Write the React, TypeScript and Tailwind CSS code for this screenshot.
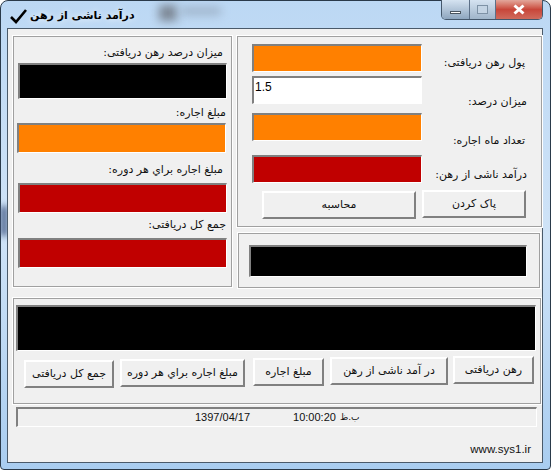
const FONT = "font-['DejaVu_Sans',sans-serif]";

function Sunken({ className, children }: { className: string; children?: React.ReactNode }) {
  return (
    <div className={`border-t-2 border-l-2 border-r border-b border-t-[#808080] border-l-[#808080] border-r-white border-b-white ${className}`}>
      {children}
    </div>
  );
}

function Label({ text, className = '' }: { text: string; className?: string }) {
  return (
    <div dir="rtl" className={`text-[11px] leading-[14px] text-[#111] whitespace-nowrap ${className}`}>
      {text}
    </div>
  );
}

function Btn({ text, className }: { text: string; className: string }) {
  return (
    <button dir="rtl" className={`bg-[#f0f0f0] text-[11px] text-[#111] border-t-2 border-l-2 border-r-2 border-b-2 border-t-white border-l-white border-r-[#808080] border-b-[#808080] shrink-0 ${className}`}>
      {text}
    </button>
  );
}

function Group({ className, children }: { className: string; children: React.ReactNode }) {
  return <div className={`border border-[#a0a0a0] shadow-[0_0_0_1px_#fff] ${className}`}>{children}</div>;
}

export default function App() {
  return (
    <div className={`${FONT} relative w-[551px] h-[470px] overflow-hidden bg-white`}>
      <div className="relative w-full h-full rounded-t-lg rounded-b-sm border border-[#2a3a4a] bg-gradient-to-b from-[#bcd8f4] via-[#cfe3f7] to-[#a9cdf0] flex flex-col">
        {/* blurred desktop behind the glass */}
        <div className="absolute left-[158px] top-[4px] w-[18px] h-[16px] bg-[#7c8794] blur-[5px]" />
        <div className="absolute left-[180px] top-[6px] w-[40px] h-[8px] bg-[#9db2c8] blur-[5px]" />
        <div className="absolute left-0 top-[205px] w-[6px] h-[30px] bg-[#3f5580] blur-[3px]" />
        <div className="relative flex items-start h-[27px] pl-[9px]">
          <svg width="17" height="15" viewBox="0 0 17 15" className="mt-[8px]">
            <path d="M1 8 L6 13 L16 1" fill="none" stroke="#000" strokeWidth="2.6" />
          </svg>
          <div dir="rtl" className="ml-[3px] mt-[8px] text-[11px] leading-[14px] font-bold text-black [text-shadow:0_0_6px_#fff]">
            درآمد ناشی از رهن
          </div>
          <div className="ml-auto mr-[7px] flex h-[20px] -mt-px border border-t-0 border-[#45586c] rounded-b-[5px] overflow-hidden">
            <div className="w-[28px] bg-gradient-to-b from-[#d5e3f1] to-[#8ea6bf] flex items-center justify-center border-r border-[#5c7088]">
              <div className="w-[11px] h-[3px] mt-[6px] bg-white border border-[#4a5560]" />
            </div>
            <div className="w-[26px] bg-gradient-to-b from-[#d5e3f1] to-[#a0b5ca] flex items-center justify-center border-r border-[#5c7088]">
              <div className="w-[11px] h-[9px] border border-[#7e92a6] bg-[#c4d4e4]" />
            </div>
            <div className="w-[46px] bg-gradient-to-b from-[#e2a69b] via-[#c8463a] to-[#cf6a5c] flex items-center justify-center">
              <svg width="14" height="11" viewBox="0 0 14 11">
                <path d="M2.5 1.5 L11.5 9.5 M11.5 1.5 L2.5 9.5" stroke="#fff" strokeWidth="3" />
              </svg>
            </div>
          </div>
        </div>

        <div className="relative mx-[6px] w-[536px] h-[435px] border border-[#4a5a6a] bg-[#f0f0f0] pl-[5px] pt-[7px]">
          <div className="flex items-start">
            <Group className="w-[219px] h-[251px] pl-[4px] pt-[9px]">
              <Label text="میزان درصد رهن دریافتی:" className="pr-[8px]" />
              <Sunken className="w-[209px] h-[36px] bg-black mt-[3px]" />
              <Label text="مبلغ اجاره:" className="mt-[7px] pr-[5px]" />
              <Sunken className="w-[209px] h-[30px] bg-[#ff8000] mt-[3px] -ml-px" />
              <Label text="مبلغ اجاره براي هر دوره:" className="mt-[10px] pr-[8px]" />
              <Sunken className="w-[209px] h-[30px] bg-[#c00000] mt-[6px]" />
              <Label text="جمع کل دریافتی:" className="mt-[5px] pr-[5px]" />
              <Sunken className="w-[209px] h-[30px] bg-[#c00000] mt-[6px]" />
            </Group>
            <div className="ml-[5px]">
              <Group className="w-[305px] h-[191px] flex">
                <div className="w-[185px] pl-[14px] pt-[7px]">
                  <Sunken className="w-[170px] h-[28px] bg-[#ff8000]" />
                  <Sunken className="w-[170px] h-[28px] bg-white mt-[4px] pl-[1px] text-[12px] leading-[18px] text-black font-['Liberation_Sans',sans-serif]">
                    1.5
                  </Sunken>
                  <Sunken className="w-[170px] h-[28px] bg-[#ff8000] mt-[9px]" />
                  <Sunken className="w-[170px] h-[28px] bg-[#c00000] mt-[14px]" />
                  <div className="flex mt-[7px] ml-[10px]">
                    <Btn text="محاسبه" className="w-[154px] h-[28px] mt-[1px]" />
                    <Btn text="پاک کردن" className="w-[104px] h-[28px] ml-[6px]" />
                  </div>
                </div>
                <div className="flex-1 pt-[19px] pr-[14px]">
                  <Label text="پول رهن دریافتی:" className="pr-[2px]" />
                  <Label text="میزان درصد:" className="mt-[25px]" />
                  <Label text="تعداد ماه اجاره:" className="mt-[25px] pr-[2px]" />
                  <Label text="درآمد ناشی از رهن:" className="mt-[20px]" />
                </div>
              </Group>
              <Group className="w-[302px] h-[55px] mt-[6px] ml-[1px] pl-[10px] pt-[11px]">
                <Sunken className="w-[278px] h-[32px] bg-black" />
              </Group>
            </div>
          </div>

          <Group className="w-[528px] h-[106px] mt-[10px] pl-[2px] pt-[6px]">
            <Sunken className="w-[520px] h-[46px] bg-black" />
            <div className="flex items-start mt-[5px] pl-[8px]">
              <Btn text="جمع کل دریافتی" className="w-[90px] h-[28px] mt-[4px]" />
              <Btn text="مبلغ اجاره براي هر دوره" className="w-[125px] h-[28px] mt-[3px] ml-[6px]" />
              <Btn text="مبلغ اجاره" className="w-[71px] h-[28px] mt-[2px] ml-[8px]" />
              <Btn text="در آمد ناشی از رهن" className="w-[118px] h-[28px] mt-[1px] ml-[6px]" />
              <Btn text="رهن دریافتی" className="w-[81px] h-[28px] ml-[5px]" />
            </div>
          </Group>

          <Sunken className="w-[521px] h-[20px] mt-[3px] ml-[3px] flex items-center font-['Liberation_Sans',sans-serif] text-[11px] text-[#111]">
            <span className="ml-[177px]">1397/04/17</span>
            <span className="ml-[43px]">10:00:20</span>
            <span dir="rtl" className="ml-[4px] font-['DejaVu_Sans',sans-serif] text-[9px]">ب.ظ</span>
          </Sunken>

          <div className="text-right pr-[11px] mt-[15px] text-[11.5px] leading-[14px] text-[#111] font-['Liberation_Sans',sans-serif]">www.sys1.ir</div>
        </div>
      </div>
    </div>
  );
}
